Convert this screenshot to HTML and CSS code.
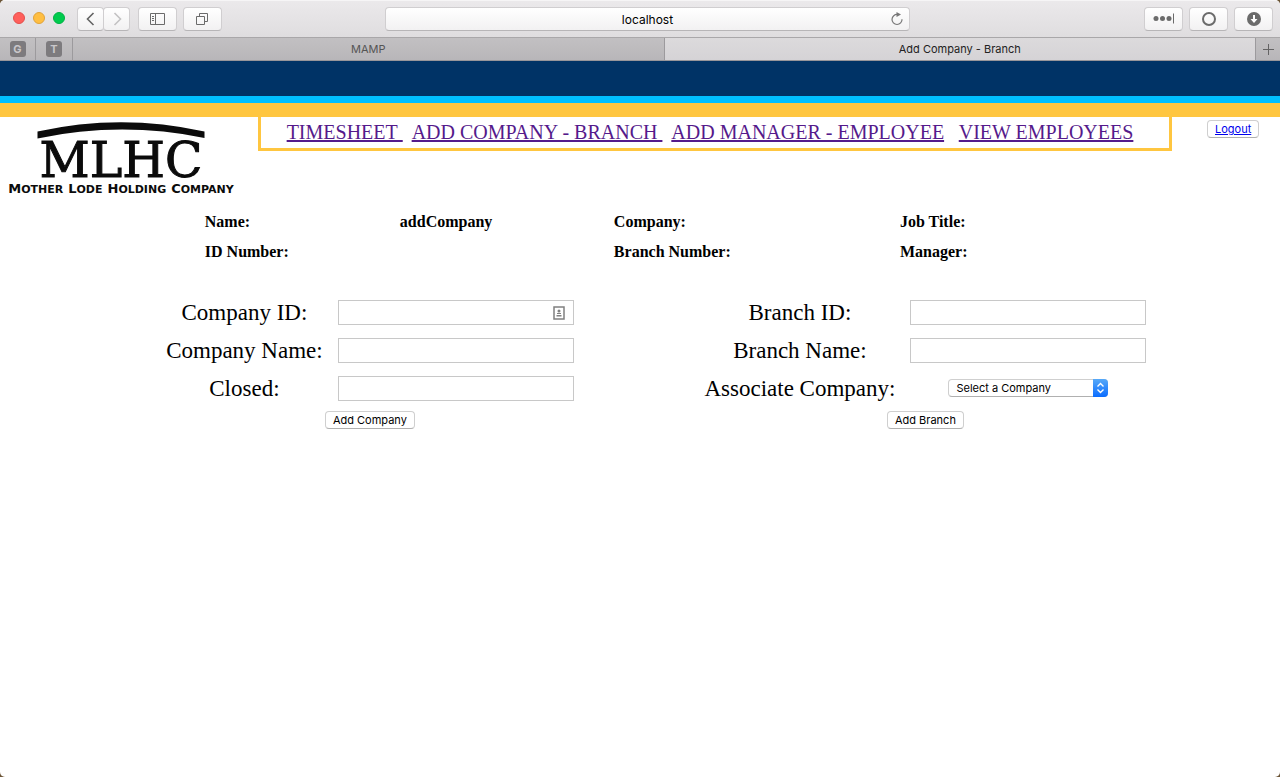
FILE: index.html
```html
<!DOCTYPE html>
<html lang="en">
<head>
<meta charset="utf-8">
<title>Add Company - Branch</title>
<link rel="stylesheet" href="styles.css">
</head>
<body>
<div class="window">
  <header class="toolbar">
    <div class="tools">
      <div class="lights">
        <button class="light red" aria-label="Close"></button>
        <button class="light amber" aria-label="Minimize"></button>
        <button class="light green" aria-label="Zoom"></button>
      </div>
      <div class="history">
        <button class="tool small" aria-label="Back"><svg width="12" height="16" viewBox="0 0 12 16"><path d="M8.500 2 2.500 8l6 6" fill="none" stroke="#636363" stroke-width="1.600"/></svg></button>
        <button class="tool small" aria-label="Forward"><svg width="12" height="16" viewBox="0 0 12 16"><path d="M3.500 2l6 6-6 6" fill="none" stroke="#c3c2c3" stroke-width="1.600"/></svg></button>
      </div>
      <button class="tool" aria-label="Sidebar"><svg width="17" height="14" viewBox="0 0 17 14" fill="none" stroke="#6b6b6b"><path d="M1.500 1.500h14v11h-14zM6.500 1.500v11M3 4.500h2M3 6.500h2M3 8.500h2"/></svg></button>
      <button class="tool" aria-label="Tabs"><svg width="15" height="14" viewBox="0 0 15 14" fill="none" stroke="#6b6b6b"><path d="M1.500 4.500h8v8h-8zM4.500 4v-2.500h8v8H10"/></svg></button>
    </div>
    <div class="address">
      <input class="url" type="text" value="localhost" aria-label="Address">
      <button class="reload" aria-label="Reload"><svg width="14" height="16" viewBox="0 0 14 16"><path d="M7.500 3.500A5 5 0 1 0 12 8.200" fill="none" stroke="#777" stroke-width="1.200"/><path d="M6.500 1v5l4.500-2.500z" fill="#777"/></svg></button>
    </div>
    <div class="tools right">
      <button class="tool" aria-label="Passwords"><svg width="22" height="14" viewBox="0 0 22 14" fill="#6b6b6b"><circle cx="3" cy="6.500" r="2.500"/><circle cx="9.500" cy="6.500" r="2.500"/><circle cx="16" cy="6.500" r="2.500"/><path d="M20 1.500h1v10h-1z"/></svg></button>
      <button class="tool" aria-label="Extension"><svg width="16" height="16" viewBox="0 0 16 16"><circle cx="8" cy="8" r="6" fill="none" stroke="#6b6b6b" stroke-width="2"/></svg></button>
      <button class="tool" aria-label="Downloads"><svg width="16" height="16" viewBox="0 0 16 16"><circle cx="8" cy="8" r="7" fill="#6b6b6b"/><path d="M7 4h2v4h2.500L8 12 4.500 8H7z" fill="#fff"/></svg></button>
    </div>
  </header>
  <nav class="tabs" aria-label="Tabs">
    <button class="tab pin"><span class="pin-mark">G</span></button>
    <button class="tab pin"><span class="pin-mark">T</span></button>
    <button class="tab">MAMP</button>
    <button class="tab active">Add Company - Branch</button>
    <button class="tab plus" aria-label="New tab"><svg width="12" height="12" viewBox="0 0 12 12"><path d="M6.500 1v11M1 6.500h11" stroke="#646364"/></svg></button>
  </nav>

  <div class="banner"></div>
  <main>
    <div class="masthead">
      <div class="logo">
        <svg width="168" height="22" viewBox="0 0 168 22" aria-hidden="true"><path d="M.500 14.500Q84-4 167.500 14.500v6.500Q84 4 .500 21.500z" fill="#0b0b0b"/></svg>
        <div class="logo-name">MLHC</div>
        <div class="logo-tag"><span>Mother</span><span>Lode</span><span>Holding</span><span>Company</span></div>
      </div>
      <nav class="menu" aria-label="Main"><a href="#">TIMESHEET&nbsp;</a>&nbsp; <a href="#">ADD COMPANY - BRANCH&nbsp;</a>&nbsp; <a href="#">ADD MANAGER - EMPLOYEE</a>&nbsp;&nbsp; <a href="#">VIEW EMPLOYEES</a>&nbsp;&nbsp;</nav>
      <div class="session"><a class="push logout" href="#">Logout</a></div>
    </div>

    <div class="info">
      <span>Name:</span><span>addCompany</span><span>Company:</span><span>Job Title:</span>
      <span>ID Number:</span><span></span><span>Branch Number:</span><span>Manager:</span>
    </div>

    <div class="forms">
      <form class="entry">
        <div class="fields">
          <label for="company-id">Company ID:</label>
          <div class="field"><input class="box" id="company-id" type="text"><svg class="contact" width="12" height="14" viewBox="0 0 12 14"><path d="M1 1h10v12H1z" fill="#fff" stroke="#808080" stroke-width="1.500"/><circle cx="6" cy="5" r="1.500" fill="#808080"/><path d="M4 7h4v1H4zM3.500 9h5v1.500h-5z" fill="#808080"/></svg></div>
          <label for="company-name">Company Name:</label>
          <div class="field"><input class="box" id="company-name" type="text"></div>
          <label for="closed">Closed:</label>
          <div class="field"><input class="box" id="closed" type="text"></div>
        </div>
        <button class="push" type="button">Add Company</button>
      </form>
      <form class="entry">
        <div class="fields">
          <label for="branch-id">Branch ID:</label>
          <div class="field"><input class="box" id="branch-id" type="text"></div>
          <label for="branch-name">Branch Name:</label>
          <div class="field"><input class="box" id="branch-name" type="text"></div>
          <label for="associate">Associate Company:</label>
          <div class="field"><div class="picker"><select class="select" id="associate"><option>Select a Company</option></select><svg class="arrows" width="15" height="18" viewBox="0 0 15 18"><path d="M4.500 7.500l3-3 3 3M4.500 10.500l3 3 3-3" fill="none" stroke="#fff" stroke-width="1.400"/></svg></div></div>
        </div>
        <button class="push" type="button">Add Branch</button>
      </form>
    </div>
  </main>
</div>
</body>
</html>
```
FILE: styles.css
```css
* { box-sizing: border-box; }

body {
  margin: 0;
  background: #6b5436;
  color: #000;
  font-family: "Liberation Serif", "Times New Roman", serif;
}

button, input, select {
  margin: 0;
  padding: 0;
  border: 0;
  background: none;
  color: inherit;
  font-family: Inter, sans-serif;
  font-size: 11px;
}

svg { display: block; }

.window {
  min-height: 100vh;
  overflow: hidden;
  border-radius: 5px;
  background: #fff;
}

/* Browser toolbar */
.toolbar {
  display: grid;
  grid-template-columns: 373fr 525fr 363fr;
  align-items: center;
  height: 37px;
  padding: 0 7px 0 12px;
  border-top: 1px solid #f6f5f6;
  background: linear-gradient(#ebe9eb, #dfdddf);
}

.tools { display: flex; align-items: center; gap: 6px; }
.right { justify-content: flex-end; }
.lights { display: flex; gap: 8px; margin: 0 6px 2px 1px; }

.light { width: 12px; height: 12px; border: 1px solid; border-radius: 50%; }
.red { background: #ff5f5b; border-color: #e2504d; }
.amber { background: #ffbe41; border-color: #e0a33a; }
.green { background: #00cb4d; border-color: #00b144; }

.history { display: flex; margin-right: 2px; }

.tool {
  display: flex;
  align-items: center;
  justify-content: center;
  width: 39px;
  height: 24px;
  border: 1px solid #d0ced0;
  border-bottom-color: #b7b5b7;
  border-radius: 4px;
  background: linear-gradient(#fff, #f2f1f2);
}
.small { width: 27px; }
.small + .small { margin-left: -1px; }

.address { position: relative; }
.url {
  display: block;
  width: 100%;
  height: 24px;
  border: 1px solid #d0ced0;
  border-bottom-color: #b7b5b7;
  border-radius: 4px;
  background: linear-gradient(#fff, #f2f1f2);
  font-size: 12px;
  text-align: center;
}
.reload { position: absolute; top: 4px; right: 6px; }

/* Tab strip */
.tabs {
  display: flex;
  height: 24px;
  border-top: 1px solid #a9a7a9;
  border-bottom: 1px solid #98969a;
}
.tab {
  display: flex;
  flex: 1;
  align-items: center;
  justify-content: center;
  border-right: 1px solid #9c9a9d;
  background: linear-gradient(#c2c0c2, #b8b6b9);
  color: #555;
}
.active { background: linear-gradient(#dcdadc, #d5d3d6); color: #222; }
.pin { flex: 0 0 36px; }
.pin + .pin { flex-basis: 37px; }
.plus { flex: 0 0 24px; border-right: 0; }
.pin-mark {
  width: 16px;
  height: 16px;
  border-radius: 3px;
  background: #7d7b7e;
  color: #c9c7ca;
  font-weight: 700;
  line-height: 16px;
}

/* Page header */
.banner {
  height: 56px;
  border-bottom: 14px solid #ffc640;
  background: linear-gradient(#003366 35px, #00bfff 35px);
}
.masthead {
  display: grid;
  grid-template-columns: 258px 1fr 108px;
  align-items: start;
}
.logo {
  display: flex;
  flex-direction: column;
  align-items: center;
  width: 242px;
  padding-bottom: 3px;
  color: #0b0b0b;
}
.logo-name {
  font-family: "DejaVu Serif", serif;
  font-size: 49px;
  line-height: 44px;
  -webkit-text-stroke: 1px #0b0b0b;
}
.logo-tag {
  display: flex;
  gap: 5px;
  font-family: "DejaVu Sans", sans-serif;
  font-size: 11px;
  font-weight: 700;
  line-height: 12px;
  text-transform: uppercase;
}
.logo-tag span::first-letter { font-size: 13px; }

.menu {
  padding: 4px 0;
  border: 3px solid #ffc640;
  border-top: 0;
  font-size: 20px;
  line-height: 23px;
  text-align: center;
}
.menu a { color: #551a8b; }
.session { padding-left: 35px; line-height: 22px; }

.push {
  display: inline-block;
  height: 18px;
  padding: 0 7px;
  border: 1px solid #cfcfcf;
  border-bottom-color: #b0b0b0;
  border-radius: 4px;
  background: #fff;
  font-family: Inter, sans-serif;
  font-size: 11px;
  line-height: 16px;
}
.logout { color: #00e; }

/* Employee summary */
.info {
  display: grid;
  grid-template-columns: 195fr 214fr 286fr 380fr;
  padding: 8px 0 0 16%;
  font-size: 16px;
  font-weight: 700;
  line-height: 30px;
}

/* Entry forms */
.forms {
  display: grid;
  grid-template-columns: 1fr 1fr;
  padding: 26px 6% 0 7.2%;
}
.entry { display: flex; flex-direction: column; align-items: center; }
.fields {
  display: grid;
  grid-template-columns: auto 236px;
  grid-auto-rows: 38px;
  column-gap: 15px;
  align-items: center;
  margin-bottom: 4px;
  font-size: 23px;
  line-height: 28px;
  text-align: center;
}
.fields label { padding-top: 2px; }
.field { position: relative; }
.box {
  display: block;
  width: 100%;
  height: 25px;
  padding: 0 4px;
  border: 1px solid #c8c8c8;
  background: #fff;
}
.contact { position: absolute; top: 6px; right: 9px; }

.picker { position: relative; width: 160px; margin: 0 auto; }
.select {
  display: block;
  width: 100%;
  height: 18px;
  padding: 0 20px 0 7px;
  border: 1px solid #cfcfcf;
  border-bottom-color: #b0b0b0;
  border-radius: 4px;
  background: #fff;
  appearance: none;
}
.arrows {
  position: absolute;
  top: 0;
  right: 0;
  border-radius: 0 4px 4px 0;
  background: linear-gradient(#57a9f8, #0a6cff);
  pointer-events: none;
}
```
